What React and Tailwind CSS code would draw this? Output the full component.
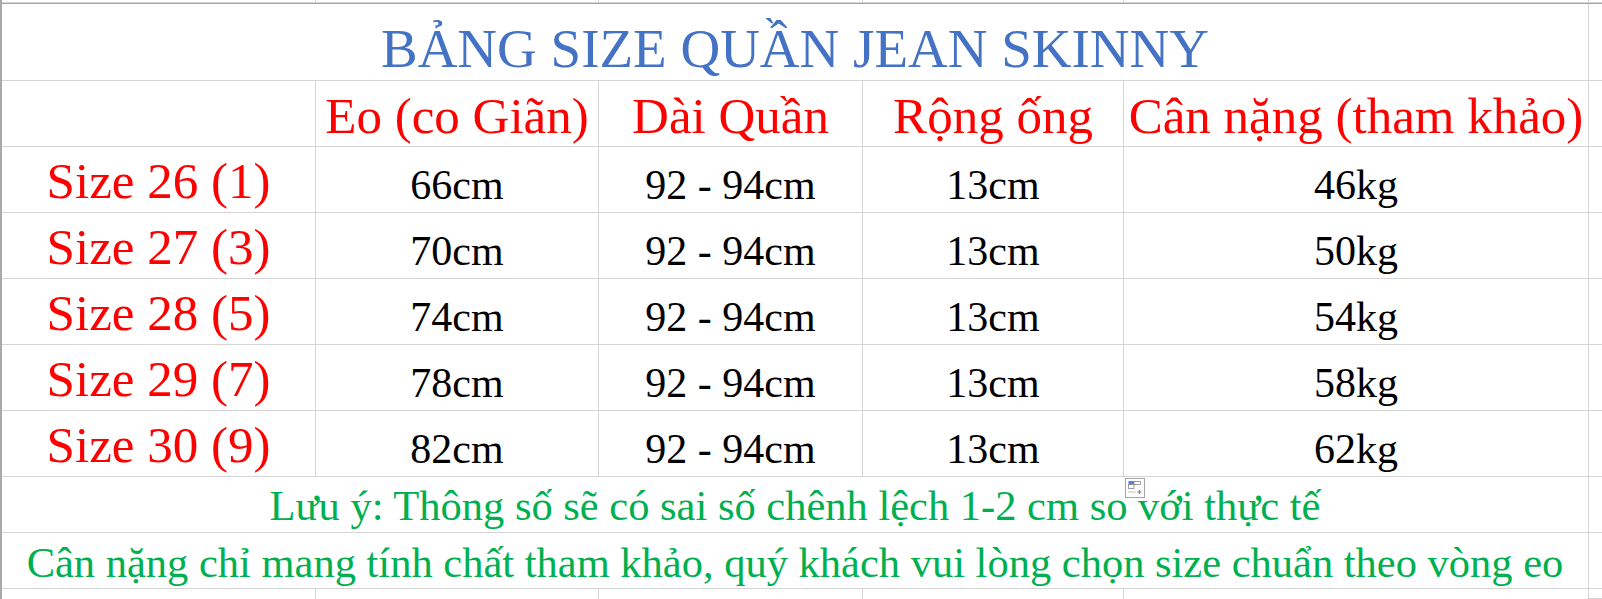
import React from 'react';

const W = ['w-[314px]', 'w-[283px]', 'w-[264px]', 'w-[261px]', 'w-[465px]'];
const line = 'border-[#d4d4d4]';

const headers = ['Eo (co Giãn)', 'Dài Quần', 'Rộng ống', 'Cân nặng (tham khảo)'];

const rows = [
  ['Size 26 (1)', '66cm', '92 - 94cm', '13cm', '46kg'],
  ['Size 27 (3)', '70cm', '92 - 94cm', '13cm', '50kg'],
  ['Size 28 (5)', '74cm', '92 - 94cm', '13cm', '54kg'],
  ['Size 29 (7)', '78cm', '92 - 94cm', '13cm', '58kg'],
  ['Size 30 (9)', '82cm', '92 - 94cm', '13cm', '62kg'],
];

function Row({ h, children }) {
  return (
    <div className={`flex ${h}`}>
      {children}
      <div className={`w-[13px] border-b ${line}`} />
    </div>
  );
}

function EmptyCells() {
  return W.map((w, i) => <div key={i} className={`${w} border-r border-b ${line}`} />);
}

function PasteIcon() {
  return (
    <svg className="absolute left-[1125px] top-[478px]" width="20" height="20" viewBox="0 0 20 20">
      <rect x="0.5" y="0.5" width="19" height="19" fill="#fff" stroke="#a6a6a6" />
      <rect x="3.5" y="3" width="5.5" height="3.5" fill="#4a86e8" />
      <rect x="9" y="3.5" width="6.5" height="3" fill="none" stroke="#8a8a8a" strokeWidth="0.8" />
      <rect x="3.5" y="6.5" width="5.5" height="4" fill="none" stroke="#8a8a8a" strokeWidth="0.8" />
      <line x1="3.5" y1="14" x2="11" y2="14" stroke="#8a8a8a" strokeWidth="1" strokeDasharray="1 1" />
      <line x1="12.3" y1="14" x2="16.3" y2="14" stroke="#7a7a7a" strokeWidth="1" />
      <line x1="14.3" y1="12" x2="14.3" y2="16" stroke="#7a7a7a" strokeWidth="1" />
    </svg>
  );
}

export default function App() {
  return (
    <div className="relative w-[1602px] h-[599px] bg-white overflow-hidden flex font-['Liberation_Serif','Times_New_Roman',serif] leading-none">
      <div className="w-[2px] bg-[#a9a9a9]" />
      <div className="w-[1600px] flex flex-col">
        <Row h="h-[3px]"><EmptyCells /></Row>
        <div className="h-px bg-[#a6a6a6]" />

        <Row h="h-[77px]">
          <div className={`w-[1587px] border-r border-b ${line} flex items-end justify-center pb-[4px] text-[55px] text-[#4472c4]`}>
            BẢNG SIZE QUẦN JEAN SKINNY
          </div>
        </Row>

        <Row h="h-[66px]">
          <div className={`${W[0]} border-r border-b ${line}`} />
          {headers.map((t, i) => (
            <div key={t} className={`${W[i + 1]} border-r border-b ${line} flex items-end justify-center pb-[4px] text-[51px] text-[#ff0000] whitespace-nowrap`}>
              {t}
            </div>
          ))}
        </Row>

        {rows.map(r => (
          <Row key={r[0]} h="h-[66px]">
            <div className={`${W[0]} border-r border-b ${line} flex items-end justify-center pb-[5px] text-[51px] text-[#ff0000] whitespace-nowrap`}>
              {r[0]}
            </div>
            {r.slice(1).map((v, i) => (
              <div key={i} className={`${W[i + 1]} border-r border-b ${line} flex items-end justify-center pb-[6px] text-[42px] text-black whitespace-nowrap`}>
                {v}
              </div>
            ))}
          </Row>
        ))}

        <Row h="h-[56px]">
          <div className={`w-[1587px] border-r border-b ${line} flex items-end justify-center pb-[5px] text-[42.5px] text-[#00b050] whitespace-nowrap`}>
            Lưu ý: Thông số sẽ có sai số chênh lệch 1-2 cm so với thực tế
          </div>
        </Row>
        <Row h="h-[56px]">
          <div className={`w-[1587px] border-r border-b ${line} flex items-end justify-center pb-[4px] text-[42.5px] text-[#00b050] whitespace-nowrap`}>
            Cân nặng chỉ mang tính chất tham khảo, quý khách vui lòng chọn size chuẩn theo vòng eo
          </div>
        </Row>
        <Row h="h-[10px]">
          {W.map((w, i) => <div key={i} className={`${w} border-r ${line}`} />)}
        </Row>
      </div>
      <PasteIcon />
    </div>
  );
}
